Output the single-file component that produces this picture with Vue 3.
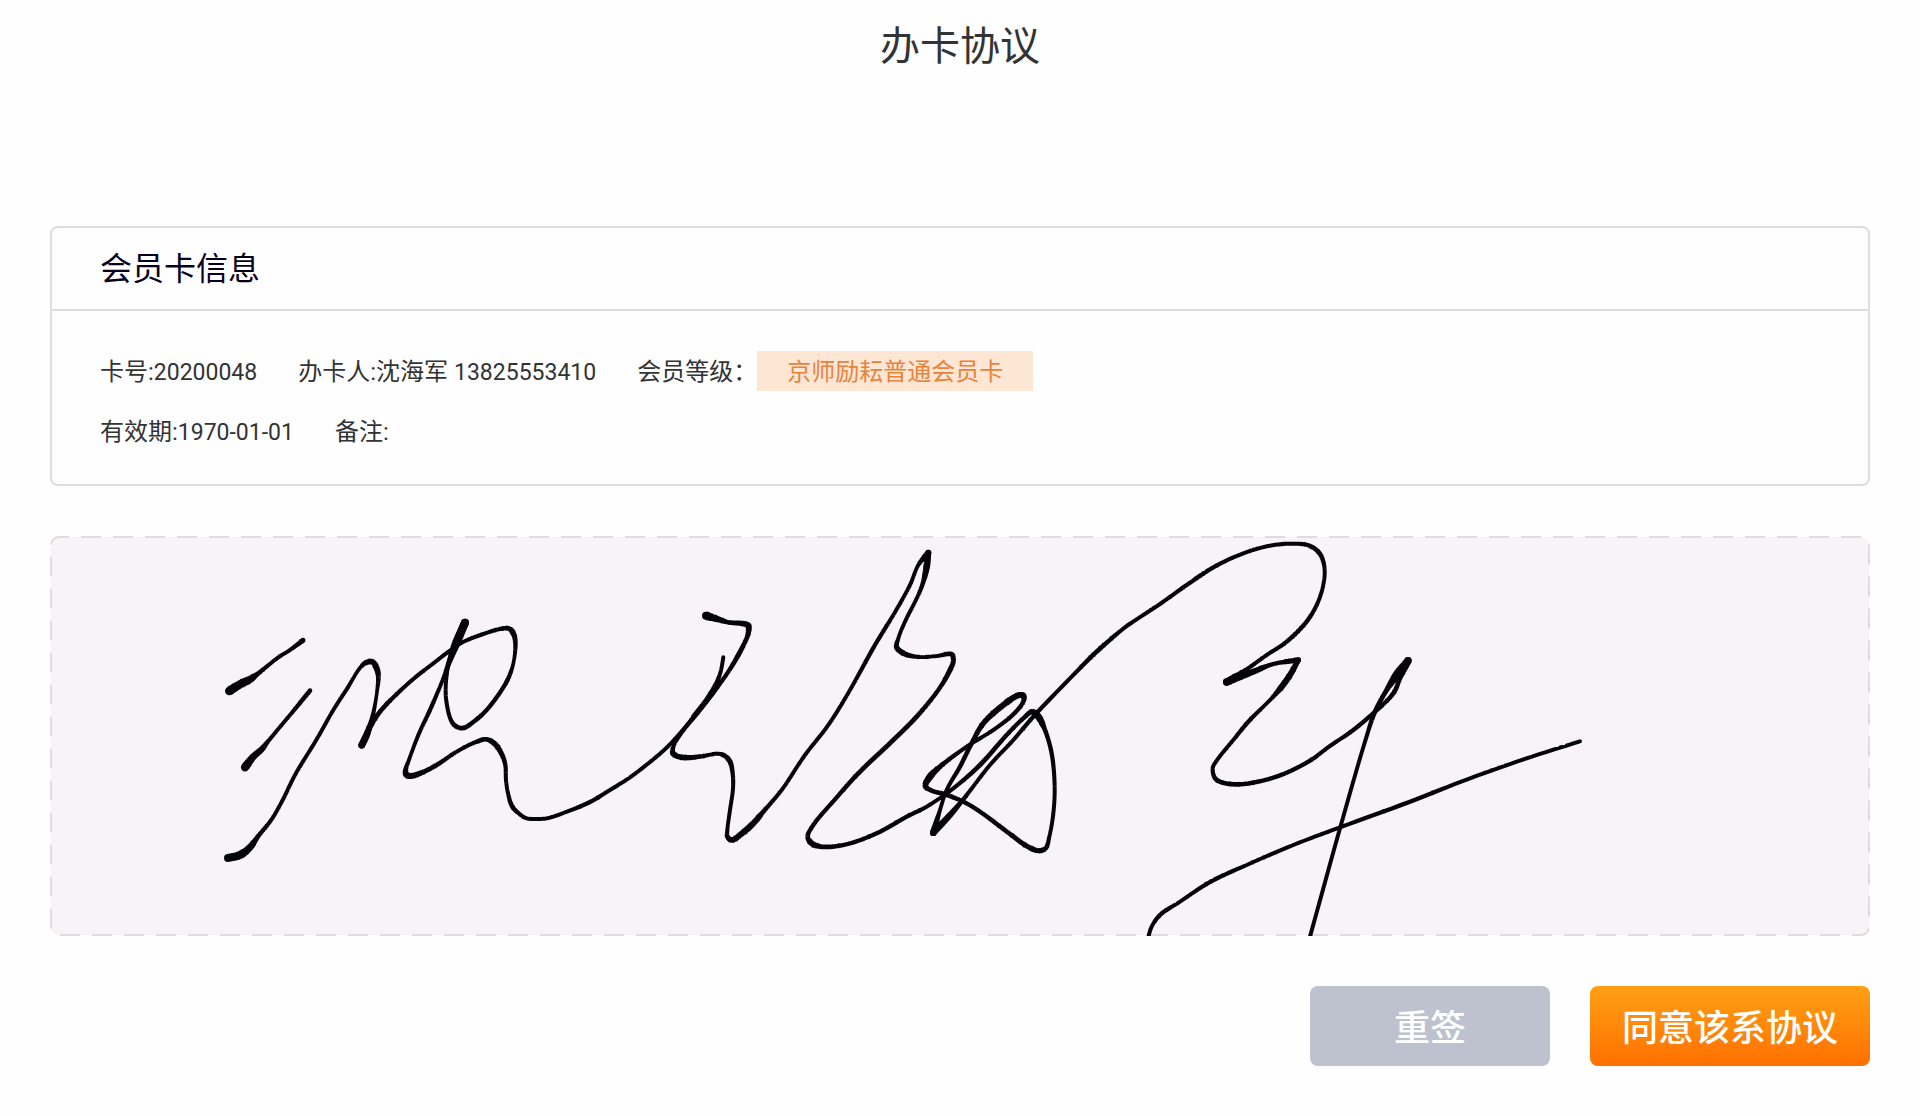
<script setup>
import { computed } from 'vue'

const card = {
  number: '20200048',
  holder: '沈海军',
  phone: '13825553410',
  level: '京师励耘普通会员卡',
  expires: '1970-01-01',
  remark: '',
}

// Recorded pen samples: x, y, pen width
const strokes = [
  [
    [759, 313, 15], [720, 342, 12], [685, 364, 12], [625, 412, 14], [600, 430, 22], [570, 445, 25], [538, 465, 26],
  ],
  [
    [780, 464, 14], [720, 537, 12], [655, 615, 13], [635, 640, 18], [610, 662, 20], [585, 694, 25],
  ],
  [
    [534, 966, 24], [570, 957, 24], [600, 934, 20], [625, 900, 14], [665, 850, 12], [698, 792, 12],
    [735, 717, 12], [800, 610, 12], [850, 522, 12], [890, 460, 12], [933, 392, 12], [950, 379, 16],
    [968, 378, 16], [980, 397, 18], [985, 420, 15], [981, 467, 11], [972, 522, 12], [963, 557, 14],
    [950, 597, 20], [935, 628, 20],
  ],
  [
    [935, 628, 20], [950, 595, 18], [963, 567, 16], [990, 527, 14], [1025, 489, 13], [1090, 429, 12],
    [1150, 382, 12], [1205, 340, 12], [1235, 320, 12], [1300, 294, 12], [1355, 278, 13], [1378, 278, 14],
    [1390, 292, 16], [1396, 317, 14], [1392, 372, 11], [1378, 420, 13], [1355, 462, 13], [1310, 522, 13],
    [1275, 554, 13], [1240, 576, 14], [1220, 572, 14], [1205, 557, 13], [1188, 487, 12], [1190, 417, 12],
    [1200, 367, 14], [1215, 327, 22], [1245, 260, 24],
  ],
  [
    [1245, 260, 24], [1220, 322, 22], [1198, 377, 16], [1180, 427, 12], [1140, 522, 13], [1105, 597, 12],
    [1075, 677, 12], [1068, 697, 14], [1068, 715, 18], [1082, 720, 18], [1115, 710, 15], [1160, 687, 14],
    [1220, 647, 12], [1280, 617, 13], [1310, 610, 14], [1335, 624, 16], [1355, 654, 15], [1366, 687, 13],
    [1368, 732, 12], [1374, 772, 12], [1387, 812, 14], [1410, 835, 12], [1430, 847, 12], [1465, 849, 12],
    [1495, 846, 12], [1540, 831, 12], [1620, 798, 13], [1680, 762, 12], [1740, 724, 12], [1805, 674, 12],
    [1850, 635, 12], [1890, 592, 12], [1950, 522, 13], [1990, 470, 13],
  ],
  [
    [1968, 239, 24], [2005, 250, 18], [2035, 259, 14], [2094, 268, 18], [2095, 290, 16], [2090, 307, 14],
    [2065, 357, 15], [2035, 407, 13], [1990, 470, 13], [1930, 544, 13], [1890, 597, 12], [1872, 627, 12],
    [1868, 650, 16], [1880, 660, 16], [1910, 665, 16], [1955, 661, 13], [2005, 653, 12], [2025, 660, 14],
    [2040, 677, 15], [2048, 712, 13], [2049, 757, 12], [2040, 822, 12], [2032, 882, 12], [2032, 902, 14],
    [2045, 912, 16], [2080, 889, 18], [2110, 862, 18], [2140, 827, 14], [2195, 762, 12], [2265, 657, 12],
    [2335, 567, 12], [2400, 462, 12], [2475, 327, 13], [2540, 220, 12], [2580, 147, 12], [2605, 87, 12],
    [2635, 50, 18],
  ],
  [
    [2020, 364, 12], [2012, 407, 12], [1998, 444, 14], [1970, 490, 14], [1930, 542, 14],
  ],
  [
    [2635, 50, 18], [2630, 92, 20], [2620, 137, 14], [2605, 177, 12], [2565, 257, 12], [2545, 307, 12],
    [2540, 334, 16], [2565, 354, 16], [2610, 363, 12], [2660, 360, 12], [2705, 355, 15], [2710, 375, 15],
    [2695, 412, 15], [2665, 462, 13], [2600, 542, 14], [2530, 612, 14], [2425, 712, 14], [2355, 790, 13],
    [2290, 867, 13], [2273, 902, 14], [2285, 922, 17], [2315, 932, 15], [2385, 926, 13], [2480, 892, 13],
    [2570, 842, 13], [2630, 812, 12], [2710, 757, 12], [2790, 687, 14], [2870, 597, 13], [2920, 547, 13],
    [2947, 527, 16], [2965, 542, 20], [2985, 582, 14], [3005, 652, 13], [3014, 752, 12], [3010, 832, 12],
    [2998, 902, 12], [2987, 937, 14], [2965, 944, 15], [2930, 930, 15], [2880, 894, 14], [2790, 827, 13],
    [2740, 797, 13], [2685, 775, 13], [2645, 764, 14], [2626, 750, 16], [2640, 722, 20], [2670, 692, 15],
    [2750, 632, 12], [2830, 582, 12], [2890, 535, 13], [2920, 497, 14], [2920, 479, 18], [2905, 478, 18],
    [2860, 507, 18], [2800, 562, 16], [2765, 622, 14], [2730, 692, 13], [2690, 762, 12], [2670, 822, 12],
    [2650, 890, 20],
  ],
  [
    [2650, 890, 20], [2700, 837, 18], [2740, 790, 13], [2820, 687, 12], [2890, 612, 12], [2950, 542, 13],
    [3065, 422, 12], [3140, 347, 14], [3225, 274, 12], [3260, 250, 12], [3330, 204, 12], [3410, 147, 13],
    [3490, 94, 13], [3580, 52, 12], [3660, 29, 12], [3720, 23, 12], [3778, 29, 13], [3810, 54, 14],
    [3824, 102, 12], [3812, 177, 12], [3775, 250, 13], [3710, 317, 13], [3650, 357, 12], [3590, 400, 13],
    [3530, 438, 22],
  ],
  [
    [3530, 438, 22], [3610, 407, 18], [3670, 384, 13], [3745, 372, 16],
  ],
  [
    [3745, 372, 16], [3720, 417, 18], [3695, 452, 18], [3665, 487, 12], [3595, 557, 13], [3550, 612, 12],
    [3500, 674, 12], [3488, 697, 12], [3498, 730, 14], [3555, 745, 14], [3670, 725, 13], [3775, 677, 13],
    [3840, 630, 12], [3910, 582, 13], [3975, 527, 13], [4015, 490, 13], [4035, 464, 14], [4050, 427, 14],
    [4074, 374, 22],
  ],
  [
    [4074, 374, 22], [4040, 417, 24], [4010, 462, 15], [3975, 527, 14], [3945, 617, 12], [3870, 877, 12],
    [3780, 1202, 12],
  ],
  [
    [3295, 1202, 12], [3305, 1172, 12], [3330, 1137, 13], [3390, 1097, 12], [3480, 1038, 13], [3590, 987, 12],
    [3730, 927, 12], [3870, 874, 12], [4080, 797, 13], [4260, 727, 12], [4430, 667, 12], [4590, 616, 12],
  ],
]

const mix = (a, b, from, to, t) =>
  a.map((v, i) => (v * (to - t) + b[i] * (t - from)) / (to - from))

// Centripetal Catmull-Rom through the samples
function smooth(points) {
  const reflect = (a, b) => [2 * a[0] - b[0], 2 * a[1] - b[1], a[2]]
  const n = points.length
  const p = [reflect(points[0], points[1]), ...points, reflect(points[n - 1], points[n - 2])]
  const out = [points[0]]
  for (let i = 1; i < n; i++) {
    const [a, b, c, d] = p.slice(i - 1, i + 3)
    const knot = (u, v) => Math.sqrt(Math.hypot(v[0] - u[0], v[1] - u[1]))
    const t1 = knot(a, b)
    const t2 = t1 + knot(b, c)
    const t3 = t2 + knot(c, d)
    for (let s = 1; s <= 8; s++) {
      const t = t1 + ((t2 - t1) * s) / 8
      const ab = mix(a, b, 0, t1, t)
      const bc = mix(b, c, t1, t2, t)
      const cd = mix(c, d, t2, t3, t)
      out.push(mix(mix(ab, bc, 0, t2, t), mix(bc, cd, t1, t3, t), t1, t2, t))
    }
  }
  return out
}

// Outline of a round nib whose width changes along the line
function outline(points) {
  const f = (v) => v.toFixed(1)
  const dots = smooth(points).map(([x, y, w]) => [x, y, w / 2])
  let d = ''
  dots.forEach(([x, y, r], i) => {
    d += `M${f(x - r)} ${f(y)}a${f(r)} ${f(r)} 0 1 1 ${f(2 * r)} 0a${f(r)} ${f(r)} 0 1 1 ${f(-2 * r)} 0z`
    if (i === 0) return
    const [px, py, pr] = dots[i - 1]
    const len = Math.hypot(x - px, y - py) || 1
    const nx = (y - py) / len
    const ny = (px - x) / len
    d += `M${f(px + nx * pr)} ${f(py + ny * pr)}L${f(x + nx * r)} ${f(y + ny * r)}`
    d += `L${f(x - nx * r)} ${f(y - ny * r)}L${f(px - nx * pr)} ${f(py - ny * pr)}z`
  })
  return d
}

const inkPaths = computed(() => strokes.map(outline))
</script>

<template>
  <main class="page">
    <h1 class="title">办卡协议</h1>

    <section class="card">
      <h2 class="card-title">会员卡信息</h2>
      <div class="card-body">
        <div class="row">
          <span class="field">卡号:<span class="digits">{{ card.number }}</span></span>
          <span class="field">办卡人:{{ card.holder }} <span class="digits">{{ card.phone }}</span></span>
          <span class="level"><span class="field">会员等级：</span><span class="tag">{{ card.level }}</span></span>
        </div>
        <div class="row">
          <span class="field">有效期:<span class="digits">{{ card.expires }}</span></span>
          <span class="field">备注:{{ card.remark }}</span>
        </div>
      </div>
    </section>

    <section class="pad">
      <svg class="frame" aria-hidden="true">
        <rect class="frame-line" x="1" y="1" rx="8" />
      </svg>
      <svg class="ink" viewBox="0 0 5460 1200" preserveAspectRatio="xMidYMid meet" role="img">
        <path v-for="(d, i) in inkPaths" :key="i" :d="d" />
      </svg>
    </section>

    <div class="actions">
      <button type="button" class="btn btn-reset">重签</button>
      <button type="button" class="btn btn-agree">同意该系协议</button>
    </div>
  </main>
</template>

<style>
body {
  margin: 0;
  background: #fefefe;
}
</style>

<style scoped>
.page {
  box-sizing: border-box;
  padding: 17px 50px 50px;
  color: #333;
  font-family: Roboto, "Noto Sans CJK SC", sans-serif;
}

.title {
  margin: 0 0 149px;
  font-size: 40px;
  font-weight: 400;
  line-height: 60px;
  text-align: center;
}

.card {
  box-sizing: border-box;
  border: 2px solid #ddd;
  border-radius: 8px;
}

.card-title {
  margin: 0;
  padding: 2px 48px 0;
  border-bottom: 2px solid #ddd;
  color: #050020;
  font-size: 32px;
  font-weight: 400;
  line-height: 79px;
}

.card-body {
  padding: 30px 48px 23px;
  font-size: 24px;
}

.row {
  display: flex;
  flex-wrap: wrap;
  align-items: center;
  column-gap: 41px;
  line-height: 58px;
}

.field {
  padding-top: 2px;
}

.digits {
  font-size: 23px;
  line-height: 1;
}

.level {
  display: flex;
  align-items: center;
}

.tag {
  padding: 2px 30px 0;
  background: #fee6d5;
  color: #e8833c;
  line-height: 38px;
}

.pad {
  position: relative;
  margin-top: 50px;
}

.frame {
  position: absolute;
  inset: 0;
  width: 100%;
  height: 100%;
}

.frame-line {
  width: calc(100% - 2px);
  height: calc(100% - 2px);
  fill: #f7f3f7;
  stroke: #ddd;
  stroke-width: 2px;
  stroke-dasharray: 20 12;
  stroke-dashoffset: 10px;
}

.ink {
  position: relative;
  display: block;
  width: 100%;
  height: auto;
  fill: #050508;
}

.actions {
  display: flex;
  justify-content: flex-end;
  gap: 40px;
  margin-top: 50px;
}

.btn {
  height: 80px;
  padding: 0 0 2px;
  border: 0;
  border-radius: 8px;
  color: #fff;
  font-family: inherit;
  font-size: 36px;
  font-weight: 500;
}

.btn-reset {
  width: 240px;
  background: #bec2cf;
}

.btn-agree {
  width: 280px;
  background: linear-gradient(#ffa014, #ff7000);
}
</style>
